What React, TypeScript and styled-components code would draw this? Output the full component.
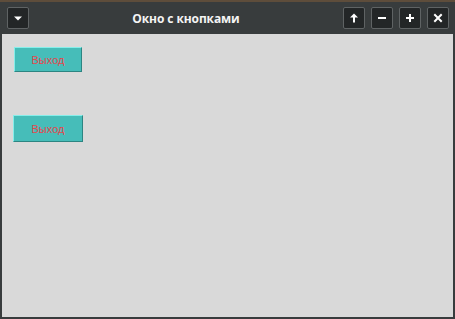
import React from 'react';
import styled, { createGlobalStyle } from 'styled-components';

const GlobalStyle = createGlobalStyle`
  html, body {
    margin: 0;
    padding: 0;
    background: #3a3d3e;
  }
`;

const Window = styled.div`
  width: 455px;
  height: 319px;
  display: flex;
  flex-direction: column;
  background: #383c3d;
  border-top: 2px solid #5e4d3b;
  box-sizing: border-box;
`;

const TitleBar = styled.div`
  height: 32px;
  flex: none;
  display: flex;
  align-items: center;
  padding: 0 6px 0 7px;
`;

const Title = styled.div`
  flex: 1;
  text-align: center;
  color: #f4f4f4;
  font-family: 'Open Sans', 'DejaVu Sans', sans-serif;
  font-weight: 700;
  font-size: 12px;
  letter-spacing: -0.1px;
`;

const Controls = styled.div`
  display: flex;
  gap: 6px;
`;

const TitleButton = styled.div`
  width: 22px;
  height: 22px;
  box-sizing: border-box;
  border: 1px solid #5f6364;
  border-radius: 2px;
  background: #232627;
  display: flex;
  align-items: center;
  justify-content: center;
`;

const Content = styled.div`
  flex: 1;
  margin: 0 2px 2px 2px;
  background: #d9d9d9;
  display: flex;
  flex-direction: column;
  align-items: flex-start;
  padding: 13px 0 0 12px;
  gap: 43px;
`;

const ExitButton = styled.button<{ $w: number; $h: number; $shift?: number }>`
  width: ${(p) => p.$w}px;
  height: ${(p) => p.$h}px;
  margin-left: ${(p) => p.$shift ?? 0}px;
  box-sizing: border-box;
  background: #46bdb9;
  border: 1px solid;
  border-color: #86eeea #2d8582 #2d8582 #86eeea;
  color: #e5474d;
  font-family: 'Liberation Sans', Arial, sans-serif;
  font-size: 11px;
  padding: 0;
  cursor: pointer;
`;

const Icon: React.FC<{ d: string }> = ({ d }) => (
  <svg width="10" height="10" viewBox="0 0 10 10">
    <path d={d} fill="none" stroke="#fff" strokeWidth="2" strokeLinecap="square" />
  </svg>
);

export default function App() {
  return (
    <>
      <GlobalStyle />
      <Window>
        <TitleBar>
          <TitleButton>
            <svg width="10" height="10" viewBox="0 0 10 10">
              <path d="M1 3.5h8L5 7.5z" fill="#fff" />
            </svg>
          </TitleButton>
          <Title>Окно с кнопками</Title>
          <Controls>
            <TitleButton>
              <svg width="10" height="10" viewBox="0 0 10 10">
                <path d="M5 0.5L1 4.5h8z" fill="#fff" />
                <rect x="4" y="4" width="2" height="5.5" fill="#fff" />
              </svg>
            </TitleButton>
            <TitleButton>
              <Icon d="M2 5h6" />
            </TitleButton>
            <TitleButton>
              <Icon d="M2 5h6M5 2v6" />
            </TitleButton>
            <TitleButton>
              <Icon d="M2 2l6 6M8 2l-6 6" />
            </TitleButton>
          </Controls>
        </TitleBar>
        <Content>
          <ExitButton $w={68} $h={25}>Выход</ExitButton>
          <ExitButton $w={70} $h={27} $shift={-1}>Выход</ExitButton>
        </Content>
      </Window>
    </>
  );
}
